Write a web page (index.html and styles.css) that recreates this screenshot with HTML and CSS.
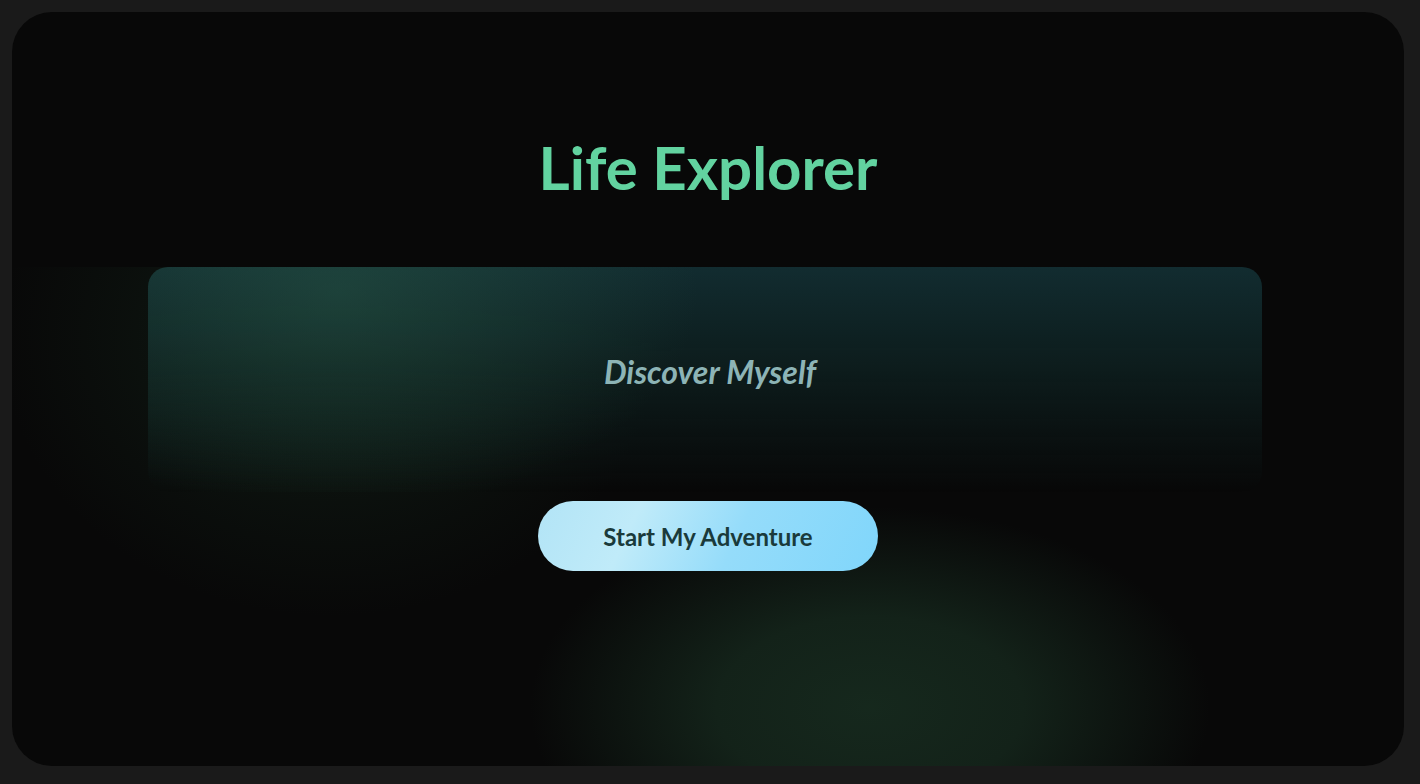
FILE: index.html
```html
<!DOCTYPE html>
<html lang="en">
<head>
<meta charset="utf-8">
<title>Life Explorer</title>
<link rel="stylesheet" href="styles.css">
</head>
<body>
<main class="app">
  <h1 class="title">Life Explorer</h1>
  <section class="stage">
    <div class="card">
      <p class="subtitle">Discover Myself</p>
    </div>
    <button class="cta" type="button">Start My Adventure</button>
  </section>
</main>
</body>
</html>
```
FILE: styles.css
```css
* { box-sizing: border-box; }
html, body { height: 100%; }
body {
  margin: 0;
  padding: 12px 16px 18px 12px;
  background: #1a1a1a;
  font-family: Lato, "Open Sans", Arial, sans-serif;
}
.app {
  height: 100%;
  background: #080808;
  border-radius: 40px;
  overflow: hidden;
  display: flex;
  flex-direction: column;
}
.title {
  margin: 119px 0 0;
  padding-bottom: 64px;
  text-align: center;
  font-size: 60px;
  line-height: 1.2;
  font-weight: 700;
  color: #62d3a0;
}
.stage {
  flex: 1;
  display: flex;
  flex-direction: column;
  align-items: center;
  background:
    radial-gradient(ellipse 330px 280px at 318px 70px, rgba(36, 78, 52, 0.28), rgba(36, 78, 52, 0) 100%),
    radial-gradient(ellipse 340px 200px at 858px 440px, rgba(30, 60, 42, 0.62) 0%, rgba(30, 60, 42, 0.5) 45%, rgba(30, 60, 42, 0) 100%);
}
.card {
  width: 1114px;
  margin-left: -6px;
  height: 225px;
  border-radius: 20px;
  padding-top: 86px;
  background:
    radial-gradient(ellipse 360px 220px at 190px 25px, rgba(46, 100, 78, 0.42), rgba(46, 100, 78, 0) 100%),
    linear-gradient(180deg, rgba(18, 44, 48, 1) 0%, rgba(14, 32, 32, 0.85) 45%, rgba(10, 12, 12, 0) 100%);
}
.subtitle {
  margin: 0;
  padding-left: 10px;
  text-align: center;
  font-size: 32px;
  line-height: 1.2;
  font-style: italic;
  font-weight: 700;
  color: #8db4b6;
}
.cta {
  margin-top: 9px;
  width: 340px;
  height: 70px;
  border: 0;
  border-radius: 35px;
  background: linear-gradient(115deg, #b2e4f6 0%, #c0ebf9 28%, #95dcfa 58%, #80d6fb 100%);
  font-family: Lato, "Open Sans", Arial, sans-serif;
  font-size: 24px;
  font-weight: 700;
  color: #1a3a3b;
  cursor: pointer;
}
```
